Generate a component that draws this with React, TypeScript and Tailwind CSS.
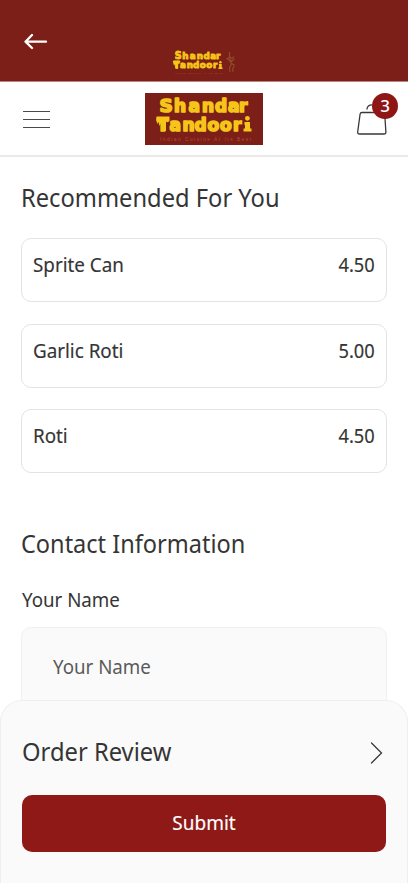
import React from 'react';

const items = [
  { name: 'Sprite Can', price: '4.50' },
  { name: 'Garlic Roti', price: '5.00' },
  { name: 'Roti', price: '4.50' },
];

function Wordmark({ className, withFigure }: { className: string; withFigure?: boolean }) {
  return (
    <svg viewBox={withFigure ? '0 0 132 52' : '0 0 118 52'} className={className} fill="#f5c518" fontFamily="'DejaVu Sans', sans-serif" fontWeight="700">
      <g stroke="#f5c518" strokeWidth="1.7" strokeLinejoin="round" fontSize="17">
        <text x="14.5 29 43.5 57 70 83 94" y="18.5">
          <tspan fontSize="18.5">S</tspan>handar
        </text>
        <text x="12 24.5 37.5 49.5 62.5 75 88" y="37.5">Tandoor</text>
      </g>
      <path d="M11.5 23.5h13l-1 5-1.500 1-1-2v10.500h-5v-8l-1.500 3-1-4-1.500 2zM99.500 29h5.500v6.500h1.500v3h-8v-3h1.500v-3.500h-.5z" />
      <circle cx="102.400" cy="25.300" r="2.400" />
      <text x="15" y="47.5" fontSize="4.8" fontWeight="400" fill="#b34c30" fontFamily="'Liberation Sans', sans-serif" textLength="91" lengthAdjust="spacing">Indian Cuisine At Its Best</text>
      {withFigure && (
        <path d="M120 6v9l5 3 4-3M120 16l-5 3 5 3 4 7-4 7 1 8M124 28l5 3-3 8 1 5M120 18l4 6 5-5" fill="none" stroke="#94502a" strokeWidth="2" />
      )}
    </svg>
  );
}

export default function App() {
  return (
    <div className="relative flex h-[883px] w-[408px] flex-col overflow-hidden bg-white font-['Noto_Sans','Open_Sans',sans-serif] text-[#353535]">
      <header className="flex h-[82px] shrink-0 items-start border-b border-[#b98380] bg-[#7c1f19]">
        <button aria-label="Back" className="mt-[33px] ml-6 h-[18px] w-[24px]">
          <svg width="24" height="18" fill="none" stroke="#fff" strokeWidth="2.3" strokeLinecap="round" strokeLinejoin="round">
            <path d="M22 8.7H1.5M8 2 1.5 8.7 8 15" />
          </svg>
        </button>
        <Wordmark withFigure className="mt-[49px] ml-[118px] h-[27px] w-[71px]" />
      </header>

      <nav className="flex h-[75px] shrink-0 items-start border-b-2 border-[#e9e9e9] pt-[11px] pr-[10px] pl-[23px]">
        <button aria-label="Menu" className="mt-[18px] flex w-[27px] flex-col gap-[7px]">
          <span className="h-px bg-[#4a4a4a]" />
          <span className="h-px bg-[#4a4a4a]" />
          <span className="h-px bg-[#4a4a4a]" />
        </button>
        <Wordmark className="ml-[95px] h-[52px] w-[118px] bg-[#7c1f19]" />
        <button aria-label="Cart" className="relative ml-auto h-[44px] w-[41px]">
          <svg width="41" height="44" fill="none" stroke="#383838" strokeWidth="1.3" strokeLinejoin="round" strokeLinecap="round">
            <path d="M5 19.5h21q1.5 0 1.7 1.5l1.2 18q.1 2-2 2H2.5q-2 0-1.8-2L3.1 21q.2-1.5 1.9-1.5ZM10 16q.4-4.2 5-4.2" />
          </svg>
          <span className="absolute top-0 right-0 flex size-[26px] items-center justify-center rounded-full bg-[#8e1716] text-[17px] font-medium text-white">3</span>
        </button>
      </nav>

      <main className="flex flex-col px-[21px]">
        <h2 className="mt-[23px] h-9 origin-left scale-x-[0.967] text-[24.5px] leading-9 whitespace-nowrap">Recommended For You</h2>
        <ul className="mt-[22px] flex flex-col gap-[21.5px]">
          {items.map((item) => (
            <li key={item.name} className="flex h-[64px] items-start justify-between rounded-[10px] border-[1.5px] border-[#e3e3e3] px-[11px] pt-[12px] text-[19px] leading-7 [-webkit-text-stroke:0.15px_#353535]">
              <span className="origin-left scale-x-[0.99]">{item.name}</span>
              <span className="origin-right scale-x-[0.96]">{item.price}</span>
            </li>
          ))}
        </ul>
        <h2 className="mt-[53px] h-9 origin-left scale-x-[0.96] text-[24.5px] leading-9 whitespace-nowrap">Contact Information</h2>
        <label className="mt-[24px] h-7 origin-left scale-x-[0.985] pl-px text-[19px] leading-7">Your Name</label>
        <div className="mt-[13px] h-[84px] rounded-[10px] border border-[#f0f0f0] bg-[#fafafa] pt-[25px] pl-[30px] text-[19px] leading-7 text-[#5a5a5a]">
          <div className="origin-left scale-x-[0.985] pl-px">Your Name</div>
        </div>
      </main>

      <section className="absolute right-0 bottom-0 left-0 flex h-[183px] flex-col rounded-t-[22px] border border-b-0 border-[#efefef] bg-[#fafafa] px-[21px]">
        <div className="mt-[33px] flex h-9 items-center justify-between">
          <h2 className="origin-left scale-x-[0.97] text-[24.5px] leading-9">Order Review</h2>
          <svg width="16" height="24" className="mr-[3px]" fill="none" stroke="#383838" strokeWidth="1.3" strokeLinecap="round">
            <path d="M4.5 3 14.5 13 4.5 23" />
          </svg>
        </div>
        <button className="mt-[25px] flex h-[57px] items-center justify-center rounded-[10px] bg-[#8e1917] pb-px text-[19px] leading-7 text-white [-webkit-text-stroke:0.15px_#fff]">
          <span>Submit</span>
        </button>
      </section>
    </div>
  );
}
